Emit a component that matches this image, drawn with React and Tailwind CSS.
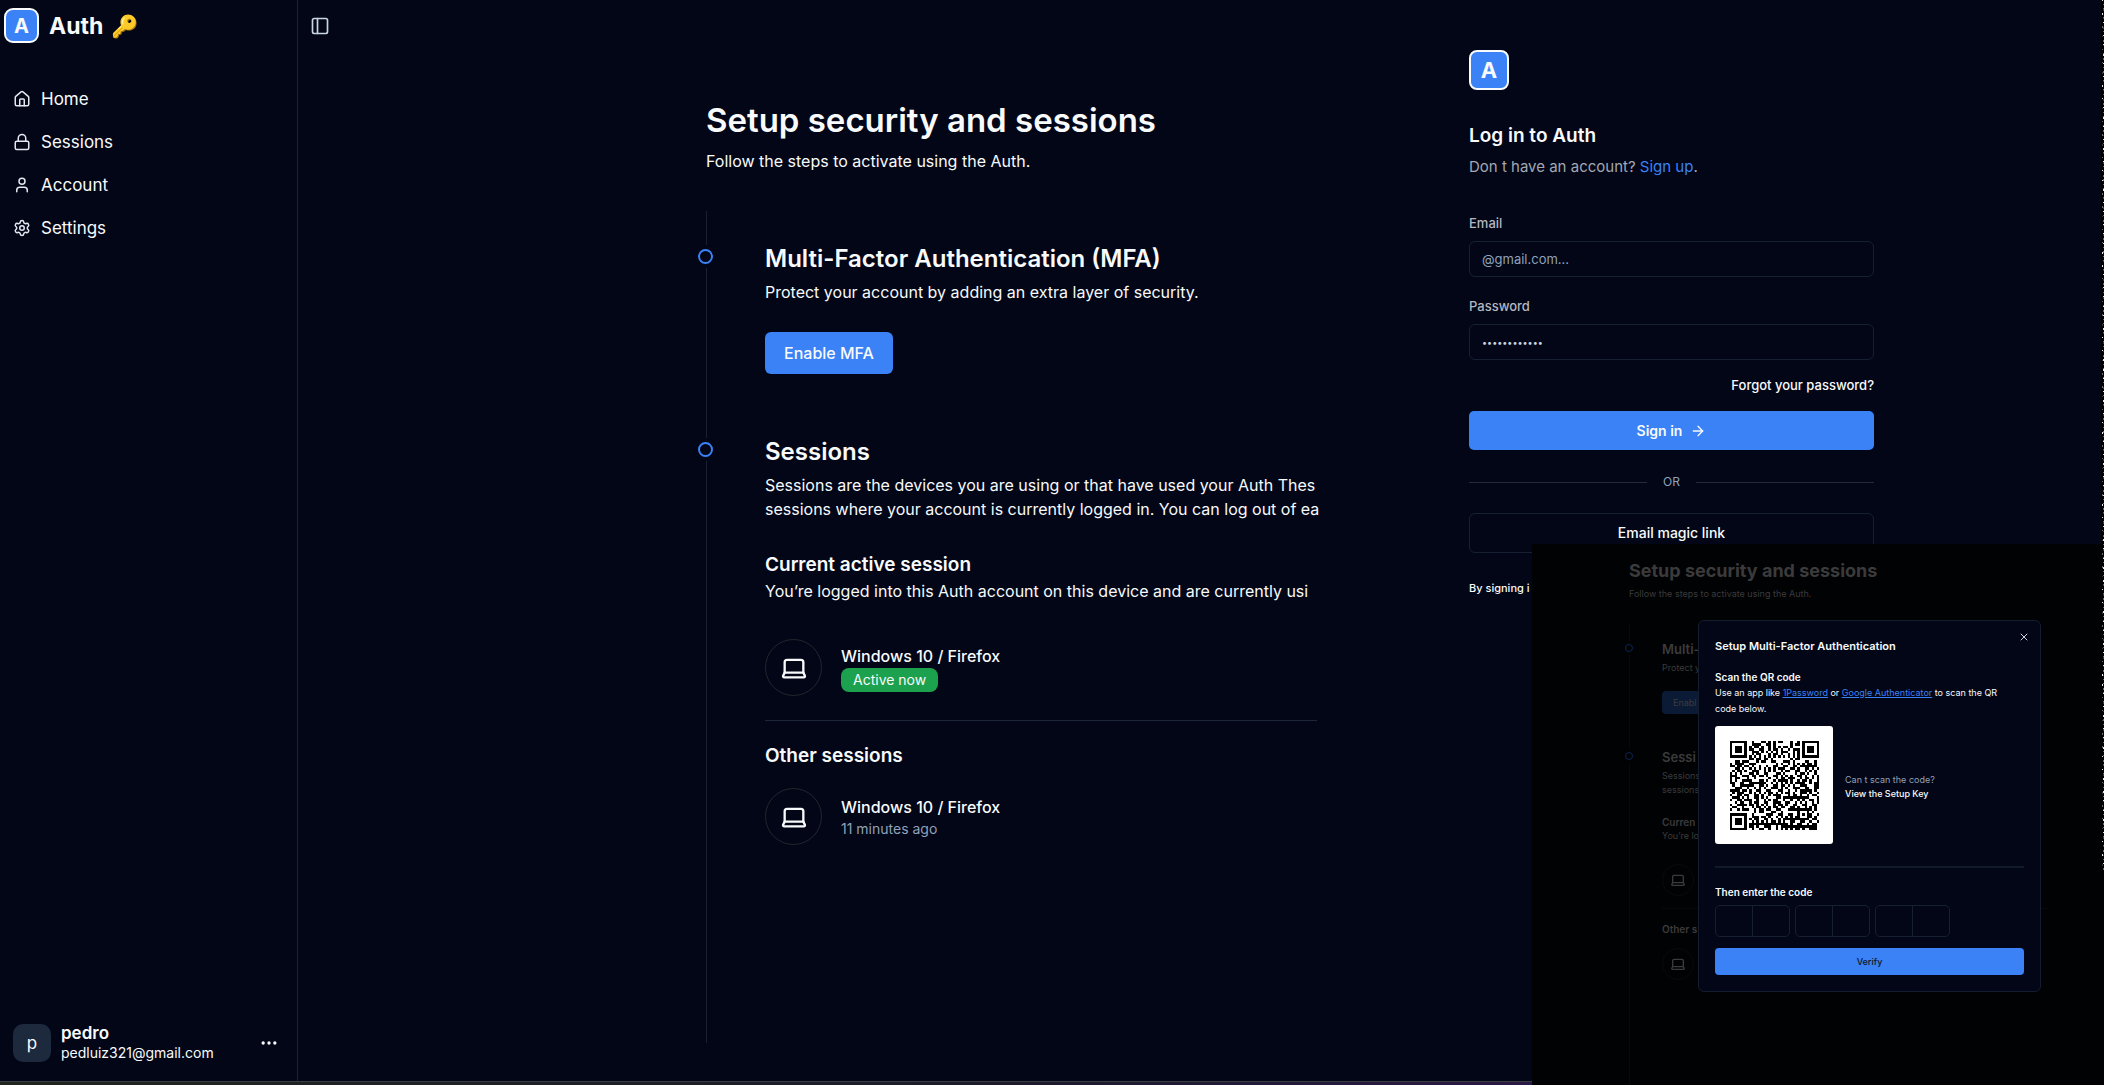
import React from "react";
import { House, Lock, User, Settings, PanelLeft, Ellipsis, Laptop, ArrowRight, X } from "lucide-react";

const NAV = [
  { label: "Home", Icon: House },
  { label: "Sessions", Icon: Lock },
  { label: "Account", Icon: User },
  { label: "Settings", Icon: Settings },
];

function Sidebar() {
  return (
    <aside className="flex flex-col border-r border-[#1a2335]">
      <div className="flex items-center gap-[10px] pt-2 pl-1">
        <span className="flex size-[35px] items-center justify-center rounded-[9px] border-2 border-slate-50 bg-[#3b82f6] text-[20px] leading-6 font-bold">
          A
        </span>
        <h2 className="flex items-center gap-2 text-[23px] leading-7 font-bold">
          Auth <span className="text-[22px]">🔑</span>
        </h2>
      </div>
      <nav className="mt-[34px] flex flex-col">
        {NAV.map(({ label, Icon }) => (
          <a key={label} href="#" className="flex h-[43px] items-center gap-[10px] pl-[13px] text-[17px] leading-6">
            <Icon size={18} strokeWidth={2} className="text-slate-200" />
            {label}
          </a>
        ))}
      </nav>
      <div className="mt-auto flex items-center gap-[10px] pr-[18px] pb-[18px] pl-[13px]">
        <span className="flex size-[38px] items-center justify-center rounded-[10px] bg-slate-800 text-[17px] leading-6">
          p
        </span>
        <div className="flex-1">
          <p className="text-[17px] leading-5 font-semibold">pedro</p>
          <p className="text-[14px] leading-5">pedluiz321@gmail.com</p>
        </div>
        <button type="button" aria-label="Account options">
          <Ellipsis size={20} />
        </button>
      </div>
    </aside>
  );
}

function Marker() {
  return (
    <span className="absolute top-[2px] -left-[71px] rounded-full bg-[#020617] p-1">
      <span className="block size-[15px] rounded-full border-2 border-[#3b82f6]" />
    </span>
  );
}

function Device({ detail }) {
  return (
    <div className="flex items-center gap-[19px]">
      <span className="flex size-[57px] items-center justify-center rounded-full border border-[#23262c]">
        <Laptop size={28} strokeWidth={2} />
      </span>
      <div>
        <p className="text-[16px] leading-6 font-medium">Windows 10 / Firefox</p>
        {detail}
      </div>
    </div>
  );
}

function Dashboard() {
  return (
    <main className="flex flex-col pt-4">
      <div className="flex pl-3">
        <button type="button" aria-label="Toggle sidebar">
          <PanelLeft size={20} className="text-slate-300" />
        </button>
      </div>
      <div className="mt-16 flex flex-1 flex-col pb-[38px] pl-[408px] whitespace-nowrap">
        <h1 className="text-[33px] leading-10 font-semibold">Setup security and sessions</h1>
        <p className="mt-[9px] text-[16px] leading-6">Follow the steps to activate using the Auth.</p>
        <div className="mt-[38px] flex-1 border-l border-[#1a202e] pt-8 pl-[58px]">
          <section>
            <div className="relative">
              <Marker />
              <h2 className="text-[24px] leading-8 font-semibold">Multi-Factor Authentication (MFA)</h2>
            </div>
            <p className="mt-[5px] text-[16px] leading-6">
              Protect your account by adding an extra layer of security.
            </p>
            <button type="button" className="mt-7 h-[42px] w-32 rounded-md bg-[#3b82f6] text-[16px] leading-6 font-medium">
              Enable MFA
            </button>
          </section>
          <section className="mt-[62px]">
            <div className="relative">
              <Marker />
              <h2 className="text-[24px] leading-8 font-semibold">Sessions</h2>
            </div>
            <p className="mt-[5px] text-[16px] leading-6">
              Sessions are the devices you are using or that have used your Auth Thes
              <br />
              sessions where your account is currently logged in. You can log out of ea
            </p>
            <h3 className="mt-[30px] text-[19px] leading-7 font-semibold">Current active session</h3>
            <p className="text-[16px] leading-6">
              You’re logged into this Auth account on this device and are currently usi
            </p>
            <div className="mt-9">
              <Device
                detail={
                  <p className="w-fit rounded-lg bg-[#1ca14f] px-3 text-[14px] leading-6">Active now</p>
                }
              />
            </div>
            <hr className="mt-6 border-[#1d2739]" />
            <h3 className="mt-[21px] text-[19px] leading-7 font-semibold">Other sessions</h3>
            <div className="mt-[18px]">
              <Device detail={<p className="text-[14px] leading-5 text-slate-400">11 minutes ago</p>} />
            </div>
          </section>
        </div>
      </div>
    </main>
  );
}

function Login() {
  return (
    <form className="w-full max-w-[557px] pt-[50px] pl-[152px]" onSubmit={(e) => e.preventDefault()}>
      <span className="flex size-10 items-center justify-center rounded-lg border-2 border-slate-50 bg-[#3b82f6] text-[22px] leading-7 font-bold">
        A
      </span>
      <h2 className="mt-8 text-[19px] leading-7 font-semibold">Log in to Auth</h2>
      <p className="mt-[5px] text-[15px] leading-6 text-[#a3a8b3]">
        Don t have an account?{" "}
        <a href="#" className="text-[#3b82f6]">
          Sign up
        </a>
        .
      </p>
      <label htmlFor="email" className="mt-[34px] block text-[13px] leading-5 font-medium text-[#b4b8c0]">
        Email
      </label>
      <input
        id="email"
        type="email"
        placeholder="@gmail.com..."
        className="mt-2 block h-9 w-full rounded-md border border-[#172032] px-3 text-[13px] placeholder:text-slate-400"
      />
      <label htmlFor="password" className="mt-[19px] block text-[13px] leading-5 font-medium text-[#b4b8c0]">
        Password
      </label>
      <input
        id="password"
        type="password"
        placeholder="••••••••••••"
        className="mt-2 block h-9 w-full rounded-md border border-[#172032] px-3 text-[9px] placeholder:text-slate-300"
      />
      <div className="mt-[15px] flex justify-end">
        <a href="#" className="text-[13px] leading-5 font-medium">
          Forgot your password?
        </a>
      </div>
      <button
        type="submit"
        className="mt-4 flex h-[39px] w-full items-center justify-center gap-2 rounded-[5px] bg-[#3b82f6] text-[14px] leading-5 font-semibold"
      >
        Sign in <ArrowRight size={16} />
      </button>
      <div className="mt-[22px] flex items-center gap-4 text-[12px] leading-5 text-slate-400">
        <span className="h-px flex-1 bg-[#222b3b]" />
        OR
        <span className="h-px flex-1 bg-[#222b3b]" />
      </div>
      <button
        type="button"
        className="mt-[21px] block h-10 w-full rounded-md border border-[#172032] text-[14px] leading-5 font-medium"
      >
        Email magic link
      </button>
      <p className="mt-[27px] text-[11px] leading-4 font-medium whitespace-nowrap">By signing i</p>
    </form>
  );
}

const QR_SIZE = 37;

function qrModules() {
  const cells = [];
  let seed = 20240817;
  const next = () => {
    seed = (seed * 1103515245 + 12345) % 2147483648;
    return (seed >> 12) & 1;
  };
  const ring = (dx, dy, on) => {
    const d = Math.max(Math.abs(dx), Math.abs(dy));
    return on.includes(d);
  };
  for (let y = 0; y < QR_SIZE; y++) {
    for (let x = 0; x < QR_SIZE; x++) {
      let on = next() === 1;
      const last = QR_SIZE - 1;
      if (y === 6 || x === 6) on = (x + y) % 2 === 0;
      if (Math.abs(x - 30) <= 2 && Math.abs(y - 30) <= 2) on = ring(x - 30, y - 30, [0, 2]);
      if (x <= 7 && y <= 7) on = ring(x - 3, y - 3, [0, 1, 3]);
      if (x >= last - 7 && y <= 7) on = ring(x - last + 3, y - 3, [0, 1, 3]);
      if (x <= 7 && y >= last - 7) on = ring(x - 3, y - last + 3, [0, 1, 3]);
      if (on) cells.push(`M${x} ${y}h1v1h-1z`);
    }
  }
  return cells.join("");
}

const QR_PATH = qrModules();

function QrCode() {
  return (
    <div className="flex size-[118px] shrink-0 items-center justify-center rounded-[3px] bg-white">
      <svg viewBox="0 0 37 37" className="size-[89px]" role="img" aria-label="QR code" shapeRendering="crispEdges">
        <path d={QR_PATH} fill="#000" />
      </svg>
    </div>
  );
}

function MfaDialog() {
  return (
    <div
      role="dialog"
      aria-labelledby="mfa-title"
      className="absolute top-[76px] right-[63px] w-[343px] rounded-md border border-[#141d2f] bg-[#020617] px-4 pt-[17px] pb-4 text-slate-50"
    >
      <button type="button" aria-label="Close" className="absolute top-[10px] right-[10px]">
        <X size={12} className="text-slate-300" />
      </button>
      <h2 id="mfa-title" className="text-[11px] leading-4 font-semibold">
        Setup Multi-Factor Authentication
      </h2>
      <h3 className="mt-4 text-[10px] leading-[15px] font-semibold">Scan the QR code</h3>
      <p className="pr-4 text-[9px] leading-4">
        Use an app like{" "}
        <a href="#" className="text-[#3b82f6] underline">
          1Password
        </a>{" "}
        or{" "}
        <a href="#" className="text-[#3b82f6] underline">
          Google Authenticator
        </a>{" "}
        to scan the QR code below.
      </p>
      <div className="mt-[9px] flex items-center gap-3">
        <QrCode />
        <div className="pt-[3px] text-[9px] leading-[14px]">
          <p className="text-slate-400">Can t scan the code?</p>
          <a href="#" className="font-medium">
            View the Setup Key
          </a>
        </div>
      </div>
      <hr className="mt-[22px] border-t-2 border-[#111a2b]" />
      <h3 className="mt-4 text-[10px] leading-4 font-semibold">Then enter the code</h3>
      <div className="mt-[5px] flex gap-[5px]">
        {[0, 1, 2].map((pair) => (
          <div key={pair} className="flex h-8 w-[75px] divide-x divide-[#172032] rounded-[5px] border border-[#172032]">
            <input aria-label={`Digit ${pair * 2 + 1}`} maxLength={1} className="w-1/2 text-center text-[11px]" />
            <input aria-label={`Digit ${pair * 2 + 2}`} maxLength={1} className="w-1/2 text-center text-[11px]" />
          </div>
        ))}
      </div>
      <button
        type="button"
        className="mt-[11px] block h-[27px] w-full rounded-[4px] bg-[#3b82f6] text-[9px] leading-4 font-medium text-[#0f172a]"
      >
        Verify
      </button>
    </div>
  );
}

function DimMarker() {
  return (
    <span className="absolute top-[2px] -left-[40px] rounded-full bg-[#010204] p-[3px]">
      <span className="block size-2 rounded-full border border-[#0c2350]" />
    </span>
  );
}

function DimDevice() {
  return (
    <span className="flex size-8 items-center justify-center rounded-full border border-[#090a0c]">
      <Laptop size={16} />
    </span>
  );
}

function MfaPreview() {
  return (
    <section className="absolute right-0 bottom-0 flex h-[541px] w-[572px] flex-col bg-[#010204] pt-[15px] pl-[97px] text-[#3b3b3c]">
      <h2 className="text-[18px] leading-6 font-bold">Setup security and sessions</h2>
      <p className="mt-1 text-[9px] leading-[14px]">Follow the steps to activate using the Auth.</p>
      <div className="mt-[22px] flex-1 border-l border-[#06080d] pt-4 pr-14 pl-8 text-[9px] leading-[14px] whitespace-nowrap">
        <div className="relative">
          <DimMarker />
          <h3 className="text-[13px] leading-5 font-semibold">Multi-</h3>
        </div>
        <p className="mt-[2px]">Protect y</p>
        <button type="button" tabIndex={-1} className="mt-4 block h-[23px] w-[72px] rounded-[4px] bg-[#0b1b36] pl-[11px] text-left">
          Enabl
        </button>
        <div className="relative mt-[33px]">
          <DimMarker />
          <h3 className="text-[13px] leading-5 font-semibold">Sessi</h3>
        </div>
        <p className="mt-[2px]">
          Sessions
          <br />
          sessions
        </p>
        <p className="mt-[18px] text-[10px] font-semibold">Curren</p>
        <p>You’re lo</p>
        <div className="mt-[21px]">
          <DimDevice />
        </div>
        <hr className="mt-3 border-[#07090e]" />
        <p className="mt-[13px] text-[10px] font-semibold">Other s</p>
        <div className="mt-3">
          <DimDevice />
        </div>
      </div>
      <MfaDialog />
    </section>
  );
}

const SPECKS = Array.from({ length: 290 }, (_, i) => ({
  y: i * 3 + ((i * 7) % 3),
  x: (i * 5) % 4 === 0 ? 1 : 2,
  h: (i * 11) % 5 < 3 ? 1 : 2,
  fill: (i * i + 3 * i) % 7 < 3 ? "#e5e5e5" : (i * 13) % 3 === 0 ? "#3a3a3a" : "#6b6b6b",
})).filter((_, i) => (i * i * 3 + i) % 10 < 7);

function EdgeSpecks() {
  return (
    <svg className="absolute top-0 right-0 h-[880px] w-[3px]" aria-hidden="true" shapeRendering="crispEdges">
      <rect width="3" height="880" fill="#000" />
      {SPECKS.map((s) => (
        <rect key={s.y} x={s.x} y={s.y} width="1" height={s.h} fill={s.fill} />
      ))}
    </svg>
  );
}

export default function App() {
  return (
    <div className="relative flex min-h-screen flex-col overflow-hidden bg-[#020617] font-['Inter',sans-serif] text-slate-50">
      <div className="grid flex-1 grid-cols-[298px_minmax(0,1019fr)_minmax(0,787fr)]">
        <Sidebar />
        <Dashboard />
        <Login />
      </div>
      <div className="h-1 border-t border-[#3a3d42] bg-linear-to-r from-[#20251f] via-[#1c1a2c] to-[#3a1163]" />
      <MfaPreview />
      <EdgeSpecks />
    </div>
  );
}
